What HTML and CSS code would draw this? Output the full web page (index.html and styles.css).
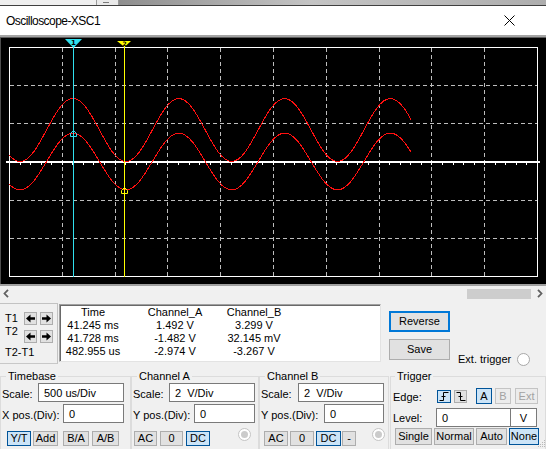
FILE: index.html
```html
<!DOCTYPE html>
<html>
<head>
<meta charset="utf-8">
<link rel="stylesheet" href="styles.css">
</head>
<body>
<div class="behind"><span class="b1"></span><span class="b2"><i></i></span><span class="b3"></span></div>
<div class="titlebar">
  <span class="title">Oscilloscope-XSC1</span>
  <svg class="close" width="11" height="11" viewBox="0 0 11 11"><path d="M0.5 0.5L10.5 10.5M10.5 0.5L0.5 10.5" stroke="#000" stroke-width="1" fill="none"/></svg>
</div>
<div class="sep"></div>
<div class="scope">
<svg width="546" height="246" viewBox="0 0 546 246">
  <defs><clipPath id="tc"><rect x="9" y="0" width="402" height="246"/></clipPath></defs>
  <rect width="546" height="246" fill="#000"/>
  <rect width="1" height="246" fill="#4d4d4d"/>
  <g stroke="#bdbdbd" stroke-dasharray="4 3" fill="none">
    <path d="M62.5 10V238M115.5 10V238M167.5 10V238M220.5 10V238M273.5 10V238M326.5 10V238M379.5 10V238M431.5 10V238M484.5 10V238"/>
    <path d="M10 47.5H537M10 85.5H537M10 162.5H537M10 200.5H537"/>
  </g>
  <rect x="9.5" y="9.5" width="528" height="229" fill="none" stroke="#fff"/>
  <rect x="6" y="123" width="534" height="2" fill="#fff"/>
  <path stroke="#fff" d="M20.5 125v2M30.5 125v2M41.5 125v2M51.5 125v2M62.5 125v2M72.5 125v2M83.5 125v2M93.5 125v2M104.5 125v2M115.5 125v2M125.5 125v2M136.5 125v2M146.5 125v2M157.5 125v2M167.5 125v2M178.5 125v2M189.5 125v2M199.5 125v2M210.5 125v2M220.5 125v2M231.5 125v2M241.5 125v2M252.5 125v2M262.5 125v2M273.5 125v2M284.5 125v2M294.5 125v2M305.5 125v2M315.5 125v2M326.5 125v2M336.5 125v2M347.5 125v2M357.5 125v2M368.5 125v2M379.5 125v2M389.5 125v2M400.5 125v2M410.5 125v2M421.5 125v2M431.5 125v2M442.5 125v2M453.5 125v2M463.5 125v2M474.5 125v2M484.5 125v2M495.5 125v2M505.5 125v2M516.5 125v2M526.5 125v2"/>
  <g clip-path="url(#tc)" fill="none" stroke="#ff1010" stroke-width="1" shape-rendering="crispEdges">
    <path d="M-32.8 60.5C-23.228 60.5 -15.192 75.46 -6.35 92S10.528 123.5 20.1 123.5S37.708 108.54 46.55 92S63.428 60.5 73 60.5S90.608 75.46 99.45 92S116.328 123.5 125.9 123.5S143.508 108.54 152.35 92S169.228 60.5 178.8 60.5S196.408 75.46 205.25 92S222.128 123.5 231.7 123.5S249.308 108.54 258.15 92S275.028 60.5 284.6 60.5S302.208 75.46 311.05 92S327.928 123.5 337.5 123.5S355.108 108.54 363.95 92S380.828 60.5 390.4 60.5S408.008 75.46 416.85 92S433.728 123.5 443.3 123.5"/>
    <path d="M-32.8 95.1C-23.228 95.1 -15.192 108.59 -6.35 123.5S10.528 151.9 20.1 151.9S37.708 138.41 46.55 123.5S63.428 95.1 73 95.1S90.608 108.59 99.45 123.5S116.328 151.9 125.9 151.9S143.508 138.41 152.35 123.5S169.228 95.1 178.8 95.1S196.408 108.59 205.25 123.5S222.128 151.9 231.7 151.9S249.308 138.41 258.15 123.5S275.028 95.1 284.6 95.1S302.208 108.59 311.05 123.5S327.928 151.9 337.5 151.9S355.108 138.41 363.95 123.5S380.828 95.1 390.4 95.1S408.008 108.59 416.85 123.5S433.728 151.9 443.3 151.9"/>
  </g>
  <rect x="73" y="1" width="1" height="238" fill="#30e0ee"/>
  <rect x="124" y="3" width="1" height="236" fill="#ffff00"/>
  <polygon points="70.5,98.5 70.5,95.5 73.5,92.5 76.5,95.5 76.5,98.5" fill="none" stroke="#30e0ee"/>
  <polygon points="121.5,155.5 121.5,152.5 124.5,149.5 127.5,152.5 127.5,155.5" fill="none" stroke="#ffff00"/>
  <polygon points="65,1 82,1 73.5,10" fill="#30e0ee"/>
  <text x="73.5" y="7" class="cnum">1</text>
  <polygon points="117,3 131,3 124.5,9" fill="#ffff00"/>
  <text x="124.5" y="7.5" class="cnum small">2</text>
</svg>
</div>
<div class="hscroll">
  <svg width="6" height="9" viewBox="0 0 6 9"><path d="M5 0.8L1.5 4.5L5 8.2" stroke="#606060" stroke-width="1.8" fill="none"/></svg>
  <span class="spacer"></span>
  <span class="thumb"></span>
  <svg class="rarrow" width="6" height="9" viewBox="0 0 6 9"><path d="M1 0.8L4.5 4.5L1 8.2" stroke="#606060" stroke-width="1.8" fill="none"/></svg>
</div>
<div class="readrow">
  <div class="cursors">
    <div class="clabels">
      <div>T1</div>
      <div>T2</div>
      <div class="t21">T2-T1</div>
    </div>
    <div class="cbtns">
      <div class="bpair">
        <span class="abtn"><svg width="11" height="11" viewBox="0 0 11 11"><path d="M1 5.5L5.5 1.5V4.3H10V6.7H5.5V9.5Z" fill="#000"/></svg></span>
        <span class="abtn"><svg width="11" height="11" viewBox="0 0 11 11"><path d="M10 5.5L5.5 1.5V4.3H1V6.7H5.5V9.5Z" fill="#000"/></svg></span>
      </div>
      <div class="bpair">
        <span class="abtn"><svg width="11" height="11" viewBox="0 0 11 11"><path d="M1 5.5L5.5 1.5V4.3H10V6.7H5.5V9.5Z" fill="#000"/></svg></span>
        <span class="abtn"><svg width="11" height="11" viewBox="0 0 11 11"><path d="M10 5.5L5.5 1.5V4.3H1V6.7H5.5V9.5Z" fill="#000"/></svg></span>
      </div>
    </div>
  </div>
  <div class="readout">
    <span>Time</span><span>Channel_A</span><span>Channel_B</span>
    <span>41.245 ms</span><span>1.492 V</span><span>3.299 V</span>
    <span>41.728 ms</span><span>-1.482 V</span><span>32.145 mV</span>
    <span>482.955 us</span><span>-2.974 V</span><span>-3.267 V</span>
  </div>
  <div class="rbtns">
    <div class="btn big focus">Reverse</div>
    <div class="btn big save">Save</div>
  </div>
  <div class="ext"><span>Ext. trigger</span><span class="radio"></span></div>
</div>
<div class="groups">
  <fieldset class="grp tb">
    <legend>Timebase</legend>
    <div class="row"><span class="lbl" style="width:36px">Scale:</span><div class="field" style="width:86px">500 us/Div</div></div>
    <div class="row r2"><span class="lbl" style="width:61px">X pos.(Div):</span><div class="field" style="width:61px">0</div></div>
    <div class="brow">
      <span class="btn sel" style="margin-left:5px;width:24px">Y/T</span>
      <span class="btn" style="margin-left:2px;width:25px">Add</span>
      <span class="btn" style="margin-left:5px;width:26px">B/A</span>
      <span class="btn" style="margin-left:3px;width:27px">A/B</span>
    </div>
  </fieldset>
  <fieldset class="grp cha">
    <legend>Channel A</legend>
    <div class="row"><span class="lbl" style="width:36px">Scale:</span><div class="field" style="width:86px">2&nbsp; V/Div</div></div>
    <div class="row r2"><span class="lbl" style="width:61px">Y pos.(Div):</span><div class="field" style="width:61px">0</div></div>
    <div class="brow">
      <span class="btn" style="margin-left:1px;width:23px">AC</span>
      <span class="btn" style="margin-left:3px;width:23px">0</span>
      <span class="btn sel" style="margin-left:3px;width:24px">DC</span>
      <span class="radio dis" style="margin-left:28px"></span>
    </div>
  </fieldset>
  <fieldset class="grp chb">
    <legend>Channel B</legend>
    <div class="row"><span class="lbl" style="width:37px">Scale:</span><div class="field" style="width:86px">2&nbsp; V/Div</div></div>
    <div class="row r2"><span class="lbl" style="width:63px">Y pos.(Div):</span><div class="field" style="width:60px">0</div></div>
    <div class="brow">
      <span class="btn" style="margin-left:3px;width:24px">AC</span>
      <span class="btn" style="margin-left:2px;width:24px">0</span>
      <span class="btn sel" style="margin-left:2px;width:25px">DC</span>
      <span class="btn" style="margin-left:1px;width:14px">-</span>
      <span class="radio dis" style="margin-left:16px"></span>
    </div>
  </fieldset>
  <fieldset class="grp trg">
    <legend>Trigger</legend>
    <div class="trow1">
      <span class="lbl" style="width:44px">Edge:</span>
      <span class="btn ebtn sel"><svg width="10" height="9" viewBox="0 0 10 9"><path d="M0.5 8.5H4.5V0.5H9.5M2.5 4.5H6.5" stroke="#000" fill="none"/></svg></span>
      <span class="btn ebtn" style="margin-left:3px;width:13px"><svg width="10" height="9" viewBox="0 0 10 9"><path d="M0.5 0.5H4.5V8.5H9.5M2.5 4.5H6.5" stroke="#000" fill="none"/></svg></span>
      <span class="btn sbtn sel" style="margin-left:9px;width:16px">A</span>
      <span class="btn sbtn off" style="margin-left:3px;width:16px">B</span>
      <span class="btn sbtn off" style="margin-left:4px;width:23px">Ext</span>
    </div>
    <div class="trow2">
      <span class="lbl lvl" style="width:43px">Level:</span>
      <div class="field" style="width:75px">0</div>
      <div class="field unit" style="width:27px">V</div>
    </div>
    <div class="trow3">
      <span class="btn" style="margin-left:2px;width:37px">Single</span>
      <span class="btn" style="margin-left:2px;width:40px">Normal</span>
      <span class="btn" style="margin-left:2px;width:31px">Auto</span>
      <span class="btn sel" style="margin-left:2px;width:30px">None</span>
    </div>
  </fieldset>
</div>
<svg class="grip" width="8" height="8" viewBox="0 0 8 8"><g fill="#b8b8b8"><rect x="6" y="0" width="1" height="1"/><rect x="4" y="2" width="1" height="1"/><rect x="6" y="2" width="1" height="1"/><rect x="2" y="4" width="1" height="1"/><rect x="4" y="4" width="1" height="1"/><rect x="6" y="4" width="1" height="1"/><rect x="0" y="6" width="1" height="1"/><rect x="2" y="6" width="1" height="1"/><rect x="4" y="6" width="1" height="1"/><rect x="6" y="6" width="1" height="1"/></g></svg>
</body>
</html>
```

FILE: styles.css
```css
* { box-sizing: border-box; }
html, body { margin: 0; padding: 0; }
body {
  width: 546px;
  height: 449px;
  overflow: hidden;
  position: relative;
  background: #f0f0f0;
  font-family: "Liberation Sans", Arial, sans-serif;
  font-size: 11px;
  color: #000;
}
.behind { display: flex; height: 6px; border-bottom: 1px solid #3f3f3f; }
.b1 { width: 97px; background: #efefef; border-right: 1px solid #9a9a9a; }
.b2 { width: 22px; background: #e9e9e9; border-right: 1px solid #9a9a9a; }
.b2 i { display: block; width: 6px; height: 1px; background: #7a7a7a; margin: 2px 0 0 6px; }
.b3 { flex: 1; background: linear-gradient(to right, #8e8e8e, #c4c4c4 45%, #adadad); }
.titlebar {
  height: 29px;
  background: #fff;
  display: flex;
  align-items: center;
  justify-content: space-between;
  padding: 0 31px 0 6px;
}
.title { font-size: 12px; letter-spacing: -0.55px; }
.close { display: block; }
.sep { height: 3px; background: linear-gradient(#a4a4a4 0 2px, #5c5c5c 2px); }
.scope { height: 246px; }
.scope svg { display: block; }
.cnum { font-family: "DejaVu Sans", sans-serif; font-size: 7px; font-weight: bold; text-anchor: middle; fill: #000; }
.cnum.small { font-size: 6px; }
.hscroll {
  display: flex;
  align-items: center;
  height: 17px;
  border-top: 2px solid #a0a0a0;
  padding: 0 3px 0 3px;
}
.hscroll svg { display: block; }
.spacer { flex: 1; }
.thumb { width: 64px; height: 10px; background: #cdcdcd; }
.rarrow { margin-left: 6px; }
.readrow { display: flex; margin-top: 2px; height: 61px; }
.cursors {
  width: 58px;
  height: 61px;
  border-top: 1px solid #c2c2c2;
  border-right: 1px solid #c2c2c2;
  border-bottom: 1px solid #c8c8c8;
  padding: 0 0 0 5px;
  display: flex;
}
.clabels { width: 19px; padding-top: 8px; line-height: 13px; white-space: nowrap; }
.t21 { margin-top: 8px; }
.cbtns { padding-top: 8px; }
.bpair { display: flex; height: 13px; }
.bpair + .bpair { margin-top: 5px; }
.abtn {
  width: 13px; height: 13px;
  background: #e1e1e1;
  border: 1px solid #adadad;
  display: flex; align-items: center; justify-content: center;
}
.abtn + .abtn { margin-left: 3px; }
.abtn svg { display: block; }
.readout {
  margin: 1px 0 0 1px;
  width: 322px;
  height: 58px;
  background: #fff;
  border-style: solid;
  border-width: 1px;
  border-color: #a0a0a0 #e3e3e3 #e3e3e3 #a0a0a0;
  box-shadow: inset 1px 1px 0 #696969;
  padding: 1px 0 0 1px;
  display: grid;
  grid-template-columns: 64px 100px 58px;
  grid-auto-rows: 13px;
  align-content: start;
  text-align: center;
  line-height: 13px;
  white-space: nowrap;
}
.btn {
  display: flex;
  align-items: center;
  justify-content: center;
  background: #e1e1e1;
  border: 1px solid #adadad;
  height: 15px;
  line-height: 13px;
  white-space: nowrap;
}
.btn.sel { background: #cce4f7; border-color: #005499; }
.btn.off { color: #a2a2a2; background: #ececec; border-color: #c4c4c4; }
.rbtns { margin-left: 8px; padding-top: 8px; display: flex; flex-direction: column; }
.btn.big { width: 61px; height: 21px; }
.btn.focus { border: 2px solid #0078d7; }
.btn.save { margin-top: 7px; }
.ext { margin: 49px 0 0 8px; display: flex; align-items: center; height: 14px; }
.radio {
  display: inline-block;
  width: 13px; height: 13px;
  border: 1px solid #a8a8a8;
  border-radius: 50%;
  background: #fff;
  margin-left: 6px;
}
.radio.dis { border-color: #c4c4c4; align-self: flex-start; margin-top: -3px; display: flex; align-items: center; justify-content: center; }
.radio.dis::after { content: ""; width: 7px; height: 7px; border-radius: 50%; background: #cbcbcb; }
.groups { display: flex; margin-top: 6px; }
fieldset.grp {
  margin: 0;
  border: 1px solid #dcdcdc;
  padding: 0 0 0 1px;
  height: 90px;
  min-width: 0;
}
fieldset.grp legend { padding: 0 2px; margin-left: 4px; line-height: 13px; }
.tb { margin-left: -1px; width: 131px; }
.cha { margin-left: 1px; width: 128px; }
.chb { margin-left: 1px; width: 130px; }
fieldset.trg { margin-left: 1px; width: 156px; padding-left: 2px; }
fieldset.trg legend { margin-left: 2px; }
.row { display: flex; align-items: center; height: 19px; }
.r2 { margin-top: 2px; }
.lbl { padding-top: 2px; white-space: nowrap; }
.field {
  height: 19px;
  border: 1px solid #7a7a7a;
  background: #fff;
  padding: 2px 0 0 5px;
  line-height: 15px;
  white-space: pre;
}
.brow { display: flex; align-items: center; margin-top: 8px; height: 15px; }
.trow1 { display: flex; align-items: center; margin-top: 5px; height: 16px; }
.ebtn { width: 14px; height: 13px; }
.sbtn { height: 16px; }
.trow2 { display: flex; align-items: center; margin-top: 4px; height: 19px; }
.lvl { padding-top: 0; }
.field.unit { margin-left: -1px; padding-left: 0; text-align: center; }
.trow3 { display: flex; align-items: center; margin-top: 1px; height: 17px; }
.trow3 .btn { height: 17px; }
.grip { position: absolute; right: 0; bottom: 1px; }
```
